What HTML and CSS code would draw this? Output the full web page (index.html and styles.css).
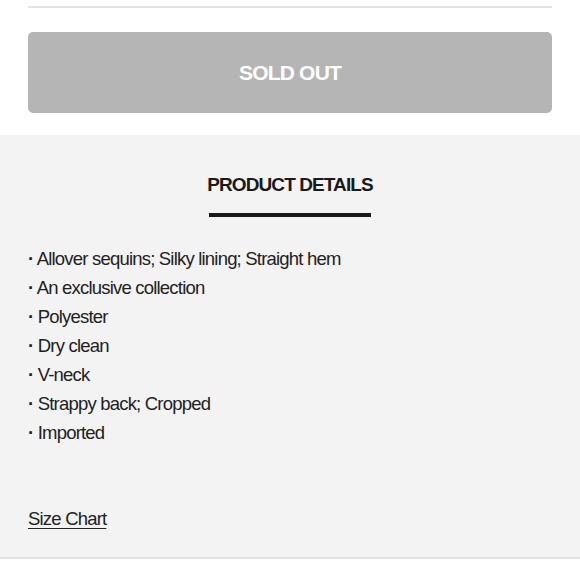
FILE: index.html
```html
<!DOCTYPE html>
<html>
<head>
<meta charset="utf-8">
<link rel="stylesheet" href="styles.css">
</head>
<body>
<div class="top">
  <div class="top-rule"></div>
  <button class="sold-out" type="button">SOLD OUT</button>
</div>
<section class="details">
  <h2 class="details-title">PRODUCT DETAILS</h2>
  <div class="title-bar"></div>
  <ul class="details-list">
    <li><b class="dot">·</b> Allover sequins; Silky lining; Straight hem</li>
    <li><b class="dot">·</b> An exclusive collection</li>
    <li><b class="dot">·</b> Polyester</li>
    <li><b class="dot">·</b> Dry clean</li>
    <li><b class="dot">·</b> V-neck</li>
    <li><b class="dot">·</b> Strappy back; Cropped</li>
    <li><b class="dot">·</b> Imported</li>
  </ul>
  <a class="size-chart" href="#">Size Chart</a>
</section>
</body>
</html>
```
FILE: styles.css
```css
html, body {
  margin: 0;
  padding: 0;
  background: #ffffff;
  font-family: "Liberation Sans", Arial, sans-serif;
  color: #1f1f1f;
}
.top {
  padding: 6px 28px 22px;
  display: flex;
  flex-direction: column;
}
.top-rule {
  height: 2px;
  background: #e4e4e4;
}
.sold-out {
  margin-top: 24px;
  height: 81px;
  border: none;
  border-radius: 5px;
  background: #b5b5b5;
  color: #ffffff;
  font-family: "Liberation Sans", Arial, sans-serif;
  font-weight: bold;
  font-size: 21px;
  letter-spacing: -0.8px;
  padding: 0;
}
.details {
  background: #f3f3f3;
  border-bottom: 2px solid #e2e2e2;
  padding: 39px 28px 27px;
  display: flex;
  flex-direction: column;
}
.details-title {
  margin: 0;
  text-align: center;
  font-size: 19px;
  line-height: 22px;
  font-weight: bold;
  letter-spacing: -0.9px;
  color: #1a1a1a;
}
.title-bar {
  align-self: center;
  width: 162px;
  height: 4px;
  background: #1a1a1a;
  margin-top: 17px;
}
.details-list {
  list-style: none;
  margin: 27px 0 0;
  padding: 0;
  font-size: 18.5px;
  line-height: 29px;
  letter-spacing: -0.8px;
  color: #222;
}
.dot {
  font-weight: bold;
}
.size-chart {
  align-self: flex-start;
  margin-top: 61px;
  font-size: 18.5px;
  line-height: 22px;
  letter-spacing: -0.8px;
  color: #222;
  text-decoration: underline;
  text-underline-offset: 3px;
}
```
